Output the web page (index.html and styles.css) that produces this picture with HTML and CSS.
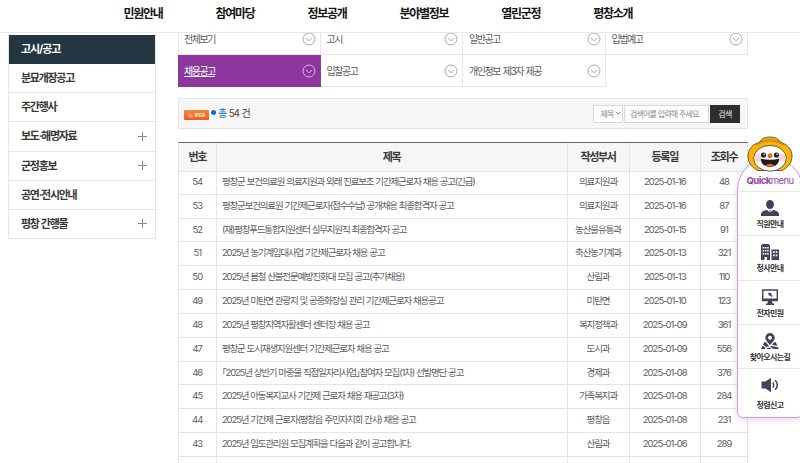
FILE: index.html
```html
<!DOCTYPE html>
<html lang="ko">
<head>
<meta charset="utf-8">
<title>채용공고</title>
<link rel="stylesheet" href="styles.css">
</head>
<body>
<svg class="defs" aria-hidden="true">
  <symbol id="chev" viewBox="0 0 14 14"><circle cx="7" cy="7" r="6"/><path d="M3.800 5.800 7 8.800l3.200-3"/></symbol>
</svg>
<header class="top">
  <nav class="gnb"><a>민원안내</a><a>참여마당</a><a>정보공개</a><a>분야별정보</a><a>열린군정</a><a>평창소개</a></nav>
</header>
<div class="page">
  <aside class="side">
    <a class="on">고시/공고</a>
    <a>분묘개장공고</a>
    <a>주간행사</a>
    <a>보도·해명자료<i class="plus"></i></a>
    <a>군정홍보<i class="plus"></i></a>
    <a>공연·전시안내</a>
    <a>평창 간행물<i class="plus"></i></a>
  </aside>
  <main class="main">
    <div class="tabs">
      <a><span>전체보기</span><svg><use href="#chev"/></svg></a>
      <a><span>고시</span><svg><use href="#chev"/></svg></a>
      <a><span>일반공고</span><svg><use href="#chev"/></svg></a>
      <a><span>입법예고</span><svg><use href="#chev"/></svg></a>
      <a class="on"><span>채용공고</span><svg><use href="#chev"/></svg></a>
      <a><span>입찰공고</span><svg><use href="#chev"/></svg></a>
      <a><span>개인정보 제3자 제공</span><svg><use href="#chev"/></svg></a>
    </div>
    <div class="bar">
      <span class="rss"><svg viewBox="0 0 6 6"><path d="M.5.8a4.700 4.700 0 0 1 4.700 4.700M.5 3a2.500 2.500 0 0 1 2.500 2.500M.6 5.200h.6"/></svg>RSS</span>
      <i class="dot"></i><span class="total"><b>총</b> 54 건</span>
      <form class="search">
        <span class="select">제목<svg viewBox="0 0 6 4"><path d="M.6.7 3 3.100 5.400.7"/></svg></span>
        <span class="field">검색어를 입력해 주세요.</span>
        <span class="btn">검색</span>
      </form>
    </div>
    <div class="table">
      <div class="row head"><span>번호</span><span>제목</span><span>작성부서</span><span>등록일</span><span>조회수</span></div>
      <div class="row"><span>54</span><span>평창군 보건의료원 의료지원과 외래 진료보조 기간제근로자 채용 공고(긴급)</span><span>의료지원과</span><span>2025-01-16</span><span>48</span></div>
      <div class="row"><span>53</span><span>평창군보건의료원 기간제근로자(접수수납) 공개채용 최종합격자 공고</span><span>의료지원과</span><span>2025-01-16</span><span>87</span></div>
      <div class="row"><span>52</span><span>(재)평창푸드통합지원센터 실무지원직 최종합격자 공고</span><span>농산물유통과</span><span>2025-01-15</span><span>91</span></div>
      <div class="row"><span>51</span><span>2025년 농기계임대사업 기간제근로자 채용 공고</span><span>축산농기계과</span><span>2025-01-13</span><span>321</span></div>
      <div class="row"><span>50</span><span>2025년 봄철 산불전문예방진화대 모집 공고(추가채용)</span><span>산림과</span><span>2025-01-13</span><span>110</span></div>
      <div class="row"><span>49</span><span>2025년 미탄면 관광지 및 공중화장실 관리 기간제근로자 채용공고</span><span>미탄면</span><span>2025-01-10</span><span>123</span></div>
      <div class="row"><span>48</span><span>2025년 평창지역자활센터 센터장 채용 공고</span><span>복지정책과</span><span>2025-01-09</span><span>361</span></div>
      <div class="row"><span>47</span><span>평창군 도시재생지원센터 기간제근로자 채용 공고</span><span>도시과</span><span>2025-01-09</span><span>556</span></div>
      <div class="row"><span>46</span><span class="halt">「2025년 상반기 마중물 직접일자리사업」참여자 모집(1차) 선발명단 공고</span><span>경제과</span><span>2025-01-08</span><span>376</span></div>
      <div class="row"><span>45</span><span>2025년 아동복지교사 기간제 근로자 채용 재공고(3차)</span><span>가족복지과</span><span>2025-01-08</span><span>284</span></div>
      <div class="row"><span>44</span><span>2025년 기간제 근로자(평창읍 주민자치회 간사) 채용 공고</span><span>평창읍</span><span>2025-01-08</span><span>231</span></div>
      <div class="row"><span>43</span><span>2025년 임도관리원 모집계획을 다음과 같이 공고합니다.</span><span>산림과</span><span>2025-01-06</span><span>289</span></div>
      <div class="row"><span></span><span></span><span></span><span></span><span></span></div>
    </div>
  </main>
</div>
<aside class="quick">
  <svg class="mascot" viewBox="0 0 46 36">
    <path d="M13 6Q15 1 23 1t10 5C40 8 45 13 45 20c0 8-5 12-10 14.500H11C6 32 1 28 1 20 1 13 6 8 13 6Z" fill="#fdb400" stroke="#453a35" stroke-width=".8"/>
    <path d="M9 9Q23 1 37 9M13 6q10-5 20 0" fill="none" stroke="#a77412" stroke-width=".7"/>
    <ellipse cx="23" cy="22.300" rx="16.300" ry="12.900" fill="#fff" stroke="#453a35" stroke-width=".8"/>
    <circle cx="11.500" cy="21.500" r="4" fill="#fbd5d7"/><circle cx="34.500" cy="21.500" r="4" fill="#fbd5d7"/>
    <circle cx="16.600" cy="19" r="2.600" fill="#252120"/><circle cx="29.400" cy="19" r="2.600" fill="#252120"/>
    <circle cx="17.200" cy="18.200" r=".8" fill="#fff"/><circle cx="30" cy="18.200" r=".8" fill="#fff"/>
    <circle cx="23" cy="19.700" r="2.200" fill="#f26b13" stroke="#8b3b18" stroke-width=".3"/>
    <path d="M13.800 22.800q9.200 2 18.400 0c0 5-4 8.200-9.200 8.200s-9.200-3.200-9.200-8.200Z" fill="#251d1d"/>
    <path d="M18.500 29.500q4.500-3.600 9 0-4.500 2.600-9 0Z" fill="#f46425"/>
  </svg>
  <div class="qtitle"><b>Quick</b>menu</div>
  <a><svg viewBox="0 0 18 16"><ellipse cx="9" cy="4.500" rx="3.900" ry="4.500"/><path d="M0 16v-1.500c0-3 2.500-4 6.200-4.600L9 13l2.800-3.100c3.700.6 6.200 1.600 6.200 4.600V16Z"/><path d="m8.100 10.200h1.800l-.5 1.200.6 2.500-1 1-1-1 .6-2.500Z"/></svg>직원안내</a>
  <a><svg viewBox="0 0 18 16"><path fill-rule="evenodd" d="M0 16V1.600L1.500 0h6L9 1.600V16H6v-3H3.500v3ZM1.500 3v1.600h1.600V3Zm2.300 0v1.600h1.600V3Zm2.300 0v1.600h1.600V3ZM1.500 6v1.600h1.600V6Zm2.300 0v1.600h1.600V6Zm2.300 0v1.600h1.600V6ZM1.500 9v1.600h1.600V9Zm2.300 0v1.600h1.600V9Zm2.300 0v1.600h1.600V9Z"/><path fill-rule="evenodd" d="M10.500 5.500H18V16h-7.500ZM12 7.300v1.700h1.700V7.300Zm2.700 0v1.700h1.700V7.300ZM12 10.500v1.700h1.700v-1.700Zm2.700 0v1.700h1.700v-1.700Z"/></svg>청사안내</a>
  <a><svg viewBox="0 0 18 16"><path fill-rule="evenodd" d="M1 .3h16v12H1ZM2.400 1.700v7.700h13.200V1.700Z"/><path d="M7 12h4l.5 2.500H13V16H5v-1.500h1.500ZM7 3.400l4.100 1.100-1.100.8 1.800 1.800-1 .9L9 6.300l-.8 1.100Z"/></svg>전자민원</a>
  <a><svg viewBox="0 0 18 16"><path fill-rule="evenodd" d="M9 0a4.700 4.700 0 0 1 4.700 4.700C13.700 7.600 11 9.500 9 12 7 9.500 4.300 7.600 4.300 4.700A4.700 4.700 0 0 1 9 0Zm0 2.700a2 2 0 1 0 0 4 2 2 0 0 0 0-4Z"/><path d="m3.300 9 1.900.6L8 13.200 5.500 14 2 11.800ZM1.500 12.700 4.600 14.600 3.800 16H0ZM14.700 9l1.800 4L11 11.700l1.500-2ZM10 12.700l6.900 1.500L18 16h-5.500L9.500 14ZM8.500 14.500l2.300 1.500H5.300l.8-1Z"/></svg>찾아오시는길</a>
  <a class="last"><svg viewBox="0 0 18 16"><path d="M.5 4.500H4.500L10 .8v14.400L4.500 11.500h-4Z"/><path d="M11.800 5.500q1.800 2.500 0 5M14.200 3.200q4.200 4.800 0 9.600" class="wave"/></svg>청렴신고</a>
</aside>
</body>
</html>
```
FILE: styles.css
```css
* { box-sizing: border-box; }
body {
  margin: 0;
  height: 463px;
  overflow: hidden;
  position: relative;
  background: #fff;
  color: #5c5c5c;
  font-family: Inter, "Noto Sans CJK KR", sans-serif;
  font-size: 9.5px;
  letter-spacing: -1.1px;
}
.defs { position: absolute; width: 0; height: 0; }
i { font-style: normal; }
svg { display: block; flex: none; }

.top {
  position: absolute;
  z-index: 2;
  top: 0;
  left: 0;
  right: 0;
  height: 33px;
  background: #fff;
  border-bottom: 1px solid #e8e8e8;
}
.gnb {
  display: flex;
  gap: 52.800px;
  padding: 0 0 0 123.5px;
  line-height: 28px;
  font-size: 12px;
  font-weight: 700;
  letter-spacing: -1.250px;
  color: #161616;
}
.page { display: flex; height: 463px; padding-left: 7.500px; }
.side {
  width: 148px;
  margin-top: 35px;
  height: 204px;
  display: flex;
  flex-direction: column;
  border: 1px solid #e6e6e6;
  border-top: 0;
}
.side a {
  flex: 1;
  display: flex;
  align-items: center;
  justify-content: space-between;
  padding: 0 8px 2px 12.500px;
  border-bottom: 1px solid #e6e6e6;
  font-size: 11px;
  font-weight: 700;
  letter-spacing: -1.280px;
  word-spacing: 0.800px;
  color: #383838;
}
.side a:last-child { border-bottom: 0; }
.side .on { background: #233642; color: #fff; border-color: #233642; letter-spacing: -1.100px; }
.plus {
  width: 9px;
  height: 9px;
  margin-top: 2px;
  background:
    linear-gradient(#888a94, #888a94) center / 9px 1px no-repeat,
    linear-gradient(#888a94, #888a94) center / 1px 9px no-repeat;
}
.main { width: 570px; margin: 23px 0 0 22.500px; }
.tabs { display: grid; grid-template-columns: repeat(4, 1fr); grid-auto-rows: 32px; }
.tabs a {
  display: flex;
  align-items: center;
  justify-content: space-between;
  padding: 0 4px 1px 6px;
  border: solid #e6e6e6;
  border-width: 0 1px 1px 0;
  font-size: 10px;
  letter-spacing: -1.450px;
  word-spacing: 1.300px;
}
.tabs a:nth-child(4n + 1) { border-left-width: 1px; padding-left: 5px; }
.tabs svg { width: 14px; height: 14px; margin-top: 1px; fill: none; stroke: #aaa; stroke-width: 1; }
.tabs .on { background: #8b379d; border-color: #8b379d; color: #fff; }
.tabs .on span { text-decoration: underline; }
.tabs .on svg { stroke: #dbb9e2; }
.bar {
  height: 31px;
  margin-top: 11px;
  padding: 0 7px 0 5px;
  display: flex;
  align-items: center;
  background: #f6f6f6;
  border: 1px solid #e4e4e4;
}
.rss {
  width: 25px;
  height: 10px;
  margin-top: 3px;
  display: flex;
  align-items: center;
  justify-content: center;
  gap: 2px;
  background: linear-gradient(#f28a3c, #f5571b);
  color: #ffe9d8;
  font-size: 5px;
  font-weight: 800;
  letter-spacing: 0.2px;
  border-radius: 1px;
}
.rss svg { width: 5px; height: 5px; fill: none; stroke: #ffe9d8; stroke-width: 0.9; }
.dot { width: 5px; height: 5px; margin: -2px 2px 0; border-radius: 50%; background: #0a72cf; }
.total { margin-top: -3px; color: #444; font-size: 10px; letter-spacing: -1.150px; word-spacing: 0.900px; }
.total b { color: #0a72cf; font-weight: 400; }
.search { margin-left: auto; display: flex; gap: 1.500px; font-size: 8px; letter-spacing: -0.900px; color: #888; }
.search span { height: 18px; display: flex; align-items: center; border: 1px solid #d8d8d8; background: #fff; padding-bottom: 1px; white-space: nowrap; }
.search .select { width: 30px; padding-left: 7px; gap: 2px; }
.select svg { width: 6px; height: 4px; fill: none; stroke: #777; stroke-width: 0.9; }
.search .field { width: 84.500px; padding-left: 5px; letter-spacing: -0.850px; word-spacing: 0.300px; }
.search .btn { width: 30px; justify-content: center; background: #2d2d2d; border-color: #2d2d2d; color: #eee; letter-spacing: -0.500px; }

.table { margin-top: 13px; border-top: 1px solid #666; border-left: 1px solid #e4e4e4; }
.row {
  display: grid;
  grid-template-columns: 37.500px 351px 62px 71.500px 47px;
  height: 23.820px;
}
.row span {
  border: solid #e4e4e4;
  border-width: 0 1px 1px 0;
  display: block;
  line-height: 22px;
  text-align: center;
  white-space: nowrap;
}
.row:not(.head) span:nth-child(2) { text-align: left; padding-left: 5.500px; letter-spacing: -1.180px; word-spacing: 0.450px; }
.row:not(.head) span:nth-child(n + 4), .row:not(.head) span:first-child { letter-spacing: -1px; }
.head { height: 28px; background: #f6f6f6; font-size: 11px; font-weight: 700; color: #383838; }
.head span { line-height: 28px; letter-spacing: -1.350px; }
.halt { font-feature-settings: "halt"; }

.quick {
  position: absolute;
  z-index: 3;
  top: 157px;
  left: 737px;
  width: 66px;
  height: 261px;
  padding-top: 15px;
  background: #fff;
  border: 1px solid #cf9bdc;
  border-radius: 33px 33px 6px 6px;
  box-shadow: 0 2px 6px rgba(80, 40, 90, 0.16);
}
.mascot { position: absolute; top: -22px; left: 9px; width: 46px; height: 36px; }
.qtitle { height: 18px; text-align: center; font-size: 9.500px; line-height: 15px; letter-spacing: -0.550px; color: #9045aa; }
.quick a {
  height: 44.300px;
  border-top: 1px solid #e8e8e8;
  padding-top: 8px;
  display: flex;
  flex-direction: column;
  align-items: center;
  gap: 3px;
  font-size: 8px;
  line-height: 11px;
  font-weight: 600;
  letter-spacing: -0.650px;
  color: #333;
}
.quick a svg { width: 18px; height: 16px; fill: #424258; }
.quick .last { gap: 7px; }
.wave { fill: none; stroke: #424258; stroke-width: 1.500; }
```
